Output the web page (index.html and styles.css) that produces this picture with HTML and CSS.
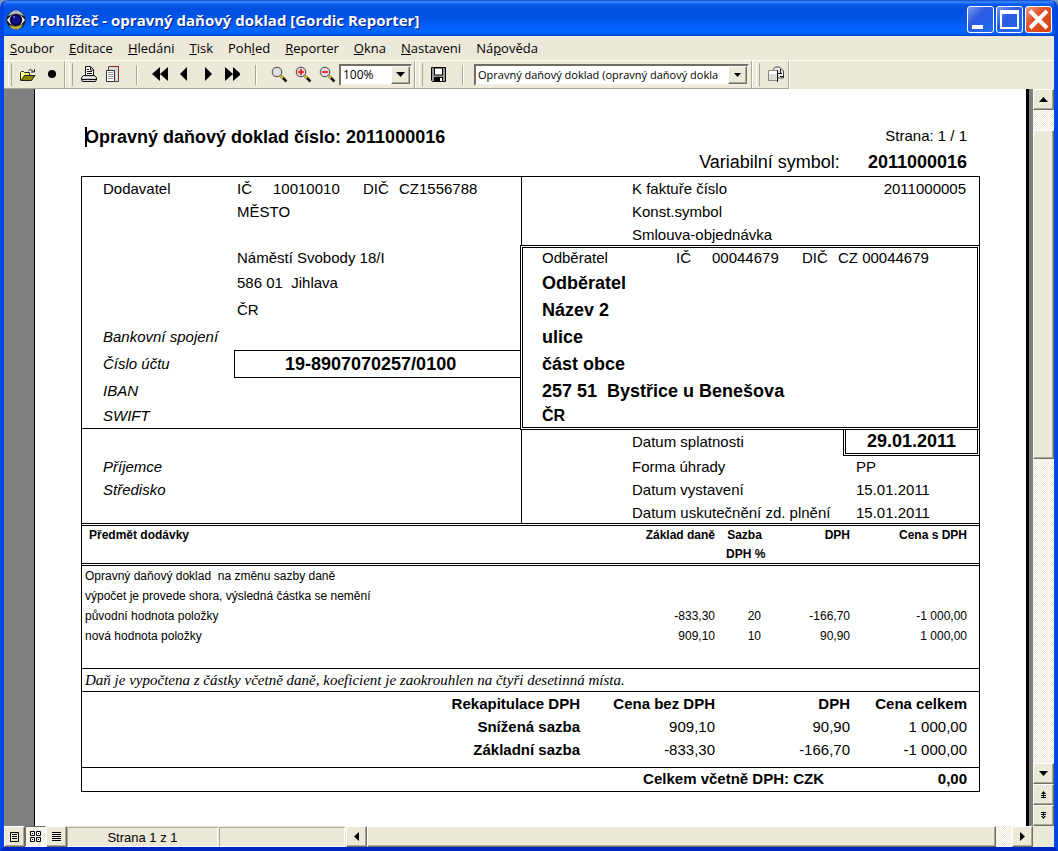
FILE: index.html
```html
<!DOCTYPE html>
<html lang="cs">
<head>
<meta charset="utf-8">
<title>Prohlížeč - opravný daňový doklad [Gordic Reporter]</title>
<link rel="stylesheet" href="styles.css">
</head>
<body>
<div class="window">
  <header class="titlebar">
    <svg class="app-icon" width="20" height="20" viewBox="0 0 20 20" aria-hidden="true">
      <circle cx="10" cy="10" r="9.500" fill="#1a1208"/>
      <path d="M2 6Q5 .5 10 .5T18 6q-8-4-16 0z" fill="#b8b8b4"/>
      <path d="M3 15q7 3 14-1-2 5.500-7 5.500T3 15z" fill="#b8a838"/>
      <path d="M1 10q4-6 9-6t9 6q-4 6-9 6t-9-6z" fill="#f4f4f4"/>
      <circle cx="10" cy="10" r="6.200" fill="#04043c"/>
      <circle cx="10" cy="10" r="4.200" fill="#10108c"/>
      <circle cx="8" cy="7" r="1" fill="#6c7cf0"/>
    </svg>
    <h1 class="title">Prohlížeč - opravný daňový doklad [Gordic Reporter]</h1>
    <div class="captions">
      <button class="caption" aria-label="Minimalizovat"><svg width="25" height="25" viewBox="0 0 25 25"><path d="M4 18h11v4H4z" fill="#fff"/></svg></button>
      <button class="caption" aria-label="Maximalizovat"><svg width="25" height="25" viewBox="0 0 25 25"><path d="M3 3h19v19H3zM5 7v13h15V7z" fill="#fff" fill-rule="evenodd"/></svg></button>
      <button class="caption close" aria-label="Zavřít"><svg width="25" height="25" viewBox="0 0 25 25"><path d="M4 4l17 17M21 4L4 21" stroke="#fff" stroke-width="4"/></svg></button>
    </div>
  </header>

  <nav class="menu">
    <button><u>S</u>oubor</button>
    <button><u>E</u>ditace</button>
    <button><u>H</u>ledáni</button>
    <button><u>T</u>isk</button>
    <button>Poh<u>l</u>ed</button>
    <button><u>R</u>eporter</button>
    <button><u>O</u>kna</button>
    <button><u>N</u>astaveni</button>
    <button>Ná<u>p</u>ověda</button>
  </nav>

  <div class="toolbars">
    <div class="band">
      <button class="tool" aria-label="Otevřít"><svg width="16" height="14" viewBox="0 0 16 14"><path d="M.5 12.500v-8l1-1h2l1 1h5v3" fill="#ffff80" stroke="#222"/><path d="M1 12.500l3.500-5H15l-3.500 5z" fill="#8c8400" stroke="#222"/><path d="M8.500 2.500q2-2.500 5 1M14.500 1v3H11" fill="none" stroke="#222"/></svg></button>
      <button class="tool" aria-label="Záznam"><svg width="16" height="16" viewBox="0 0 16 16"><circle cx="8" cy="7" r="4"/></svg></button>
    </div>
    <div class="band">
      <button class="tool" aria-label="Tisk"><svg width="16" height="17" viewBox="0 0 16 17"><path d="M4.500 9.500v-9h5l3 3v6" fill="#fff" stroke="#111"/><path d="M6 3.500h2M6 5.500h5M6 7.500h5M9.500 1v3h3" stroke="#111" fill="none"/><path d="M2.500 9.500h11l2 2v2H.5v-2z" fill="#c8c8c8" stroke="#111"/><path d="M2 11.500h12" stroke="#fff"/><path d="M.5 13.500h15l-1 2h-13z" fill="#ddd" stroke="#111"/></svg></button>
      <button class="tool" aria-label="Vzhled stránky"><svg width="14" height="17" viewBox="0 0 14 17"><path d="M2.500.500h10v15h-10z" fill="#ddd" stroke="#444"/><path d="M3 .500h10M12.500 1v15" stroke="#f00" stroke-dasharray="1 2"/><path d="M.5 4.500h8v11h-8z" fill="#fff" stroke="#333"/><path d="M2 6.500h5M2 8.500h5M2 10.500h5M2 12.500h5" stroke="#999"/></svg></button>
      <span class="divider"></span>
      <button class="tool" aria-label="První strana"><svg width="16" height="16" viewBox="0 0 16 16"><path d="M8 0v14L0 7zM16 0v14L8 7z"/></svg></button>
      <button class="tool" aria-label="Předchozí strana"><svg width="16" height="16" viewBox="0 0 16 16"><path d="M11 0v14L4 7z"/></svg></button>
      <button class="tool" aria-label="Další strana"><svg width="16" height="16" viewBox="0 0 16 16"><path d="M5 0v14l7-7z"/></svg></button>
      <button class="tool" aria-label="Poslední strana"><svg width="16" height="16" viewBox="0 0 16 16"><path d="M1 0v14l8-7zM9 0v14l8-7z"/></svg></button>
      <span class="divider"></span>
      <button class="tool" aria-label="Lupa"><svg width="17" height="17" viewBox="0 0 17 17"><path d="M10 10l5.500 5.500" stroke="#111" stroke-width="2.500"/><path d="M10 10l2 2" stroke="#e8d800" stroke-width="2"/><circle cx="6" cy="6" r="4.800" fill="#ddd" stroke="#444"/></svg></button>
      <button class="tool" aria-label="Zvětšit"><svg width="17" height="17" viewBox="0 0 17 17"><path d="M10 10l5.500 5.500" stroke="#111" stroke-width="2.500"/><path d="M10 10l2 2" stroke="#e8d800" stroke-width="2"/><circle cx="6" cy="6" r="4.800" fill="#ddd" stroke="#444"/><path d="M3 6h6M6 3v6" stroke="#f00" stroke-width="1.500"/></svg></button>
      <button class="tool" aria-label="Zmenšit"><svg width="17" height="17" viewBox="0 0 17 17"><path d="M10 10l5.500 5.500" stroke="#111" stroke-width="2.500"/><path d="M10 10l2 2" stroke="#e8d800" stroke-width="2"/><circle cx="6" cy="6" r="4.800" fill="#ddd" stroke="#444"/><path d="M3 6h6" stroke="#f00" stroke-width="1.500"/></svg></button>
      <label class="combo zoom"><select aria-label="Měřítko"><option>100%</option></select><span class="drop"><svg width="9" height="5" viewBox="0 0 9 5"><path d="M0 0h9L4.500 5z"/></svg></span></label>
    </div>
    <div class="band">
      <button class="tool" aria-label="Uložit"><svg width="16" height="16" viewBox="0 0 16 16"><path d="M.5.500h14v14h-13l-1-1z" fill="#999" stroke="#000"/><path d="M3.500 1h8v7h-8z" fill="#fff" stroke="#000"/><path d="M3 10h9v5H3z"/><path d="M9 11h2v3H9z" fill="#fff"/></svg></button>
      <span class="divider"></span>
      <label class="combo report"><select aria-label="Sestava"><option>Opravný daňový doklad (opravný daňový dokla</option></select><span class="drop"><svg width="7" height="4" viewBox="0 0 7 4"><path d="M0 0h7L3.500 4z"/></svg></span></label>
    </div>
    <div class="band">
      <button class="tool" aria-label="Export"><svg width="17" height="17" viewBox="0 0 17 17"><path d="M4.500 4.500l3-3.500h4l4 4v7h-6v-8" fill="#eee" stroke="#444"/><path d="M.5 4.500h9v10h-9z" fill="#ddd" stroke="#888"/><path d="M1 5h8v3H1z" fill="#fff"/><path d="M9.500 4v12M10 7.500h4M12 10.500h4M12.500 3v4" stroke="#111" fill="none"/></svg></button>
    </div>
  </div>

  <div class="viewer">
    <div class="desk">
      <main class="paper">
        <div class="doc-head">
          <h2 class="doc-title">Opravný daňový doklad číslo: 2011000016</h2>
          <span class="page-no">Strana: 1 / 1</span>
          <div class="symbol"><span>Variabilní symbol:</span><strong>2011000016</strong></div>
        </div>

        <div class="invoice">
          <div class="parties">
            <section class="left">
              <div class="rows supplier">
                <div class="row ids"><span>Dodavatel</span><span>IČ</span><span>10010010</span><span>DIČ</span><span>CZ1556788</span></div>
                <div class="row pair"><span></span><span>MĚSTO</span></div>
                <div class="row"></div>
                <div class="row pair"><span></span><span>Náměstí Svobody 18/I</span></div>
                <div class="row tall pair"><span></span><span class="pre">586 01  Jihlava</span></div>
                <div class="row tall pair"><span></span><span>ČR</span></div>
                <div class="row tall"><em>Bankovní spojení</em></div>
                <div class="row tall pair"><em>Číslo účtu</em><strong class="account">19-8907070257/0100</strong></div>
                <div class="row tall"><em>IBAN</em></div>
                <div class="row"><em>SWIFT</em></div>
              </div>
              <div class="rows recipient">
                <div class="row tall"></div>
                <div class="row"><em>Příjemce</em></div>
                <div class="row"><em>Středisko</em></div>
              </div>
            </section>
            <section class="right">
              <div class="rows refs">
                <div class="row split"><span>K faktuře číslo</span><span>2011000005</span></div>
                <div class="row">Konst.symbol</div>
                <div class="row">Smlouva-objednávka</div>
              </div>
              <div class="customer">
                <div class="row ids"><span>Odběratel</span><span>IČ</span><span>00044679</span><span>DIČ</span><span>CZ 00044679</span></div>
                <div class="row tall strong">Odběratel</div>
                <div class="row tall strong">Název 2</div>
                <div class="row tall strong">ulice</div>
                <div class="row tall strong">část obce</div>
                <div class="row tall strong pre">257 51  Bystřice u Benešova</div>
                <div class="row country">ČR</div>
              </div>
              <div class="dates">
                <div class="due"><span>Datum splatnosti</span><strong>29.01.2011</strong></div>
                <div class="row split-left"><span>Forma úhrady</span><span>PP</span></div>
                <div class="row split-left"><span>Datum vystavení</span><span>15.01.2011</span></div>
                <div class="row split-left"><span>Datum uskutečnění zd. plnění</span><span>15.01.2011</span></div>
              </div>
            </section>
          </div>

          <table class="items">
            <colgroup><col><col class="c-base"><col class="c-rate"><col class="c-vat"><col class="c-total"></colgroup>
            <thead>
              <tr><th class="name">Předmět dodávky</th><th>Základ daně</th><th class="rate">Sazba<span class="unit">DPH %</span></th><th>DPH</th><th>Cena s DPH</th></tr>
            </thead>
            <tbody>
              <tr><td class="name pre">Opravný daňový doklad  na změnu sazby daně</td><td></td><td></td><td></td><td></td></tr>
              <tr><td class="name">výpočet je provede shora, výsledná částka se nemění</td><td></td><td></td><td></td><td></td></tr>
              <tr><td class="name">původní hodnota položky</td><td>-833,30</td><td>20</td><td>-166,70</td><td>-1 000,00</td></tr>
              <tr><td class="name">nová hodnota položky</td><td>909,10</td><td>10</td><td>90,90</td><td>1 000,00</td></tr>
            </tbody>
          </table>

          <p class="note">Daň je vypočtena z částky včetně daně, koeficient je zaokrouhlen na čtyři desetinná místa.</p>

          <table class="recap">
            <colgroup><col><col class="c-base"><col class="c-base"><col class="c-total"></colgroup>
            <thead>
              <tr><th>Rekapitulace DPH</th><th>Cena bez DPH</th><th>DPH</th><th>Cena celkem</th></tr>
            </thead>
            <tbody>
              <tr><th>Snížená sazba</th><td>909,10</td><td>90,90</td><td>1 000,00</td></tr>
              <tr><th>Základní sazba</th><td>-833,30</td><td>-166,70</td><td>-1 000,00</td></tr>
            </tbody>
          </table>
          <div class="grand"><strong>Celkem včetně DPH: CZK</strong><strong class="sum">0,00</strong></div>
        </div>
      </main>
    </div>
    <div class="vscroll">
      <button class="sb" aria-label="Nahoru"><svg width="9" height="5" viewBox="0 0 9 5"><path d="M0 5h9L4.500 0z"/></svg></button>
      <div class="vtrack"><div class="vthumb"></div></div>
      <button class="sb" aria-label="Dolů"><svg width="9" height="5" viewBox="0 0 9 5"><path d="M0 0h9L4.500 5z"/></svg></button>
      <button class="sb" aria-label="Předchozí strana"><svg width="5" height="7" viewBox="0 0 5 7"><path d="M2.500 0L5 3H0zM2 2h1v4H2zM0 6h5v1H0zM0 4h5v1H0z"/></svg></button>
      <button class="sb" aria-label="Další strana"><svg width="5" height="7" viewBox="0 0 5 7"><path d="M2.500 7L5 4H0zM2 1h1v4H2zM0 0h5v1H0zM0 2h5v1H0z"/></svg></button>
    </div>
  </div>

  <footer class="status">
    <button class="sb" aria-label="Stránka"><svg width="9" height="10" viewBox="0 0 9 10"><path d="M.5.500h8v9h-8zM2 2.500h5M2 4.500h5M2 6.500h5" fill="none" stroke="#000"/></svg></button>
    <button class="sb pressed" aria-label="Více stránek"><svg width="11" height="11" viewBox="0 0 11 11"><path d="M.5.500h4v4h-4zM6.500.500h4v4h-4zM.5 6.500h4v4h-4zM6.500 6.500h4v4h-4z" fill="none" stroke="#000"/><path d="M2 2h1v1H2zM8 2h1v1H8zM2 8h1v1H2zM8 8h1v1H8z"/></svg></button>
    <button class="sb" aria-label="Seznam"><svg width="9" height="9" viewBox="0 0 9 9"><path d="M0 .500h9M0 2.500h9M0 4.500h9M0 6.500h9M0 8.500h9" stroke="#000"/></svg></button>
    <div class="field page">Strana 1 z 1</div>
    <div class="field blank"></div>
    <div class="hscroll">
      <button class="sb" aria-label="Doleva"><svg width="5" height="9" viewBox="0 0 5 9"><path d="M5 0v9L0 4.500z"/></svg></button>
      <div class="htrack"><div class="hthumb"></div></div>
      <button class="sb" aria-label="Doprava"><svg width="5" height="9" viewBox="0 0 5 9"><path d="M0 0v9l5-4.500z"/></svg></button>
    </div>
    <div class="corner"></div>
  </footer>
</div>
</body>
</html>
```

FILE: styles.css
```css
* { box-sizing: border-box; }

body {
  margin: 0;
  background: #7a96b8;
  color: #000;
  font-family: "Liberation Sans", Arial, sans-serif;
  font-size: 15px;
}

button {
  margin: 0;
  padding: 0;
  border: 0;
  background: none;
  color: inherit;
  font: inherit;
}

svg { display: block; }

.window {
  display: flex;
  flex-direction: column;
  min-height: 100vh;
  border: solid #0046e0;
  border-width: 0 4px 4px;
  border-bottom-color: #0024c0;
  border-radius: 8px 8px 0 0;
  background: #ece9d8;
  overflow: hidden;
}

/* Title bar */
.titlebar {
  display: flex;
  align-items: center;
  gap: 4px;
  height: 36px;
  margin: 0 -4px;
  padding: 3px 6px 0;
  background: linear-gradient(#0a48c8 0, #3c8cff 2px, #0a5cee 4px, #0050e0 9px, #0054e6 19px, #0064ff 28px, #0066ff 33px, #0040c8 36px);
}

.title {
  flex: 1;
  margin: 0;
  color: #fff;
  font: bold 15px/20px "Open Sans", "Noto Sans", sans-serif;
  text-shadow: 1px 1px #0a1a80;
  white-space: nowrap;
}

.captions { display: flex; gap: 2px; }

.caption {
  width: 27px;
  height: 27px;
  border: 1px solid #fff;
  border-radius: 3px;
  background: linear-gradient(135deg, #7a98f0, #2c5ae0 40%, #1c6cf4);
}

.close { background: linear-gradient(135deg, #f0a088, #e05028 40%, #d8440e); }

/* Menu */
.menu {
  display: flex;
  gap: 15px;
  height: 24px;
  padding: 0 6px;
  font: 13px/24px "Open Sans", "Noto Sans", sans-serif;
}

/* Toolbars */
.toolbars {
  display: flex;
  height: 29px;
  border-top: 1px solid #fff;
}

.band {
  display: flex;
  align-items: center;
  padding: 0 2px 0 12px;
  border-right: 1px solid #aca899;
  border-bottom: 1px solid #aca899;
  box-shadow: 1px 0 #fff;
  position: relative;
}

.band::before {
  content: "";
  position: absolute;
  left: 4px;
  top: 2px;
  bottom: 2px;
  width: 2px;
  border-left: 1px solid #fff;
  border-right: 1px solid #aca899;
}

.band:first-child, .band:last-child { padding-right: 0; }

.tool {
  display: flex;
  align-items: center;
  justify-content: center;
  width: 24px;
  height: 24px;
}

.divider {
  width: 2px;
  height: 20px;
  margin: 0 10px 0 11px;
  border-left: 1px solid #aca899;
  border-right: 1px solid #fff;
}

.combo {
  display: flex;
  height: 22px;
  border: 2px solid;
  border-color: #716f64 #f1efe2 #f1efe2 #716f64;
  background: #fff;
}

.combo select {
  flex: 1;
  min-width: 0;
  padding: 0 0 0 2px;
  border: 0;
  background: #fff;
  color: #000;
  appearance: none;
  font: 12px/18px "Open Sans", "Noto Sans", sans-serif;
}

.zoom { width: 73px; }
.report { width: 275px; }
.report select { font-size: 11px; }

.drop {
  display: flex;
  align-items: center;
  justify-content: center;
  width: 19px;
}

.drop, .sb, .vthumb, .hthumb {
  border: 1px solid;
  border-color: #fff #716f64 #716f64 #fff;
  background: #ece9d8;
  box-shadow: inset -1px -1px #aca899;
}

/* Viewer */
.viewer { display: flex; flex: 1; }

.desk {
  flex: 1;
  display: flex;
  padding: 0 4px 0 30px;
  background: #808080;
}

.paper {
  flex: 1;
  padding: 36px 46px 24px;
  border-left: 1px solid #000;
  border-right: 3px solid #000;
  background: #fff;
}

.doc-head {
  display: grid;
  grid-template-columns: 1fr auto;
  grid-template-rows: 24px 27px;
  align-items: center;
  padding: 0 13px 0 4px;
}

.doc-title {
  position: relative;
  margin: 0;
  font-size: 18px;
}

.doc-title::before {
  content: "";
  position: absolute;
  left: 0;
  top: 0;
  width: 2px;
  height: 20px;
  background: #000;
}

.page-no { align-self: start; text-align: right; line-height: 22px; }

.symbol {
  grid-column: 1 / -1;
  display: flex;
  justify-content: flex-end;
  gap: 28px;
  font-size: 18px;
  line-height: 27px;
}

.invoice { border: 1px solid #000; }

.parties {
  display: grid;
  grid-template-columns: 439fr 458fr;
}

.rows { padding-left: 21px; }
.row { height: 23px; line-height: 23px; white-space: nowrap; }
.tall { height: 27px; line-height: 27px; }
.pre { white-space: pre; }

.ids {
  display: grid;
  grid-template-columns: 134px 36px 90px 36px 1fr;
}

.pair {
  display: grid;
  grid-template-columns: 134px 1fr;
}

.supplier {
  height: 252px;
  border-bottom: 1px solid #000;
}

.account {
  height: 28px;
  margin-left: -3px;
  padding-left: 50px;
  border: solid #000;
  border-width: 1px 0 1px 1px;
  font-size: 18px;
  line-height: 26px;
}

.refs, .dates { border-left: 1px solid #000; }
.refs { height: 68px; padding: 0 13px 0 110px; }

.split { display: flex; justify-content: space-between; }

.customer {
  position: relative;
  margin: 0 -1px;
  padding-left: 19px;
  border: 3px double #000;
}

.customer .ids { height: 22px; line-height: 20px; }
.country { height: 22px; line-height: 22px; }
.strong { font-size: 18px; font-weight: bold; }
.country { font-size: 16px; font-weight: bold; }

.due, .split-left {
  display: grid;
  grid-template-columns: 1fr 134px;
  padding-left: 110px;
}

.split-left span + span { padding-left: 11px; }

.due {
  grid-template-columns: 1fr 137px;
  margin-right: -1px;
  line-height: 23px;
}

.due strong {
  border: double #000;
  border-width: 0 3px 3px;
  font-size: 18px;
  text-align: center;
}

.recipient .row, .dates .row { line-height: 21px; }
.dates .row:last-child { height: 21px; }

.items, .recap {
  width: 100%;
  border-collapse: separate;
  border-spacing: 0;
  table-layout: fixed;
}

.c-base { width: 135px; }
.c-rate { width: 48px; }
.c-vat { width: 87px; }
.c-total { width: 129px; }

.items th, .items td, .recap th, .recap td {
  padding: 0;
  text-align: right;
  vertical-align: top;
  white-space: nowrap;
}

.items { font-size: 12px; border-bottom: 1px solid #000; padding-bottom: 22px; }

.items thead th {
  border: double #000;
  border-width: 3px 0;
  line-height: 18px;
}

.unit { display: block; padding-top: 1px; }

.items tbody td { line-height: 20px; }
.items tbody td:nth-child(3) { padding-right: 2px; }

.items .name { padding-left: 3px; text-align: left; }
.items .pre { white-space: pre; }
.items thead .name { padding-left: 7px; }
.items .rate { text-align: center; padding-left: 11px; }
.items tr > :last-child, .recap tr > :last-child { padding-right: 12px; }

.note {
  margin: 0;
  padding-left: 3px;
  border-bottom: 1px solid #000;
  font: italic 15px/22px "Liberation Serif", "Times New Roman", serif;
  white-space: nowrap;
}

.recap { padding-bottom: 6px; border-bottom: 1px solid #000; line-height: 23px; }

.grand {
  display: flex;
  justify-content: flex-end;
  padding: 0 12px 1px 0;
  line-height: 22px;
}

.sum { width: 143px; text-align: right; }

/* Scroll bars */
.sb {
  display: flex;
  align-items: center;
  justify-content: center;
  width: 21px;
  height: 21px;
}

.vscroll {
  display: flex;
  flex-direction: column;
  width: 21px;
}

.vtrack, .htrack, .pressed {
  background: repeating-conic-gradient(#fff 0 25%, #ece9d8 0 50%) 0 0 / 2px 2px;
}

.vtrack { flex: 1; padding-top: 20px; }
.vthumb { height: 52%; }

/* Status bar */
.status { display: flex; height: 21px; }

.status > .pressed {
  border-color: #716f64 #fff #fff #716f64;
  box-shadow: none;
}

.field {
  margin: 1px 1px 0 0;
  border: 1px solid;
  border-color: #aca899 #fff #fff #aca899;
  text-align: center;
  font-size: 13px;
  line-height: 19px;
}

.page { width: 151px; }
.blank { width: 126px; }
.hscroll { display: flex; flex: 1; }
.htrack { flex: 1; padding-right: 16px; }
.hthumb { height: 21px; }
.corner { width: 21px; }
```
